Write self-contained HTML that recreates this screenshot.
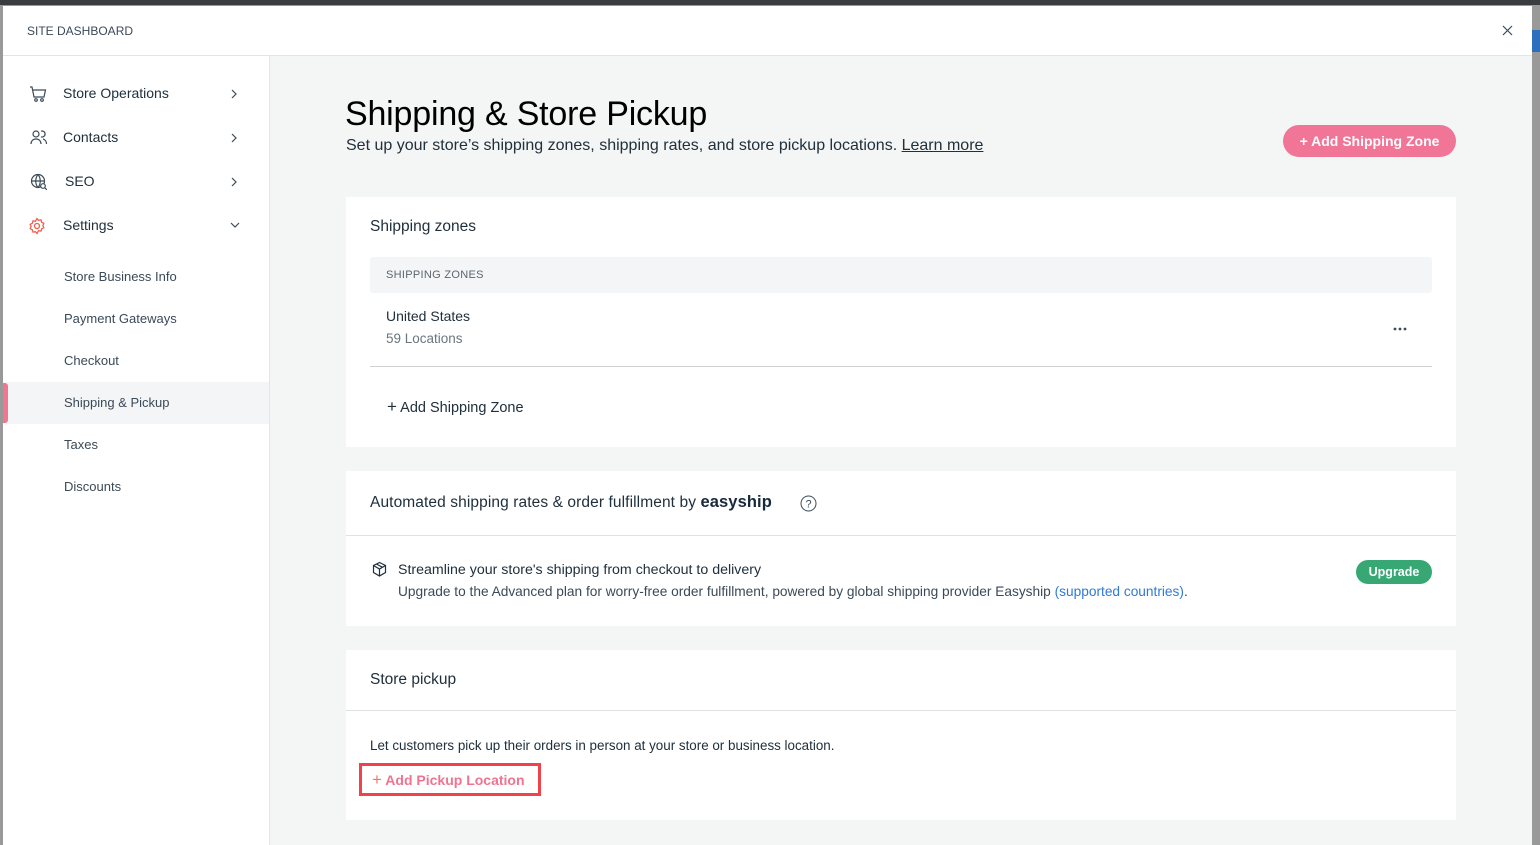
<!DOCTYPE html>
<html><head><meta charset="utf-8"><style>
*{margin:0;padding:0;box-sizing:border-box}
body{width:1540px;height:845px;overflow:hidden;background:#999;font-family:"Liberation Sans",sans-serif;position:relative;color:#20303c}
.a{position:absolute;white-space:nowrap}
.topbar{left:0;top:0;width:1540px;height:5px;background:#3a3d40}
.modal{left:3px;top:6px;width:1529px;height:839px;background:#fff}
.hdr{left:3px;top:55px;width:1529px;height:1px;background:#e3e5e6}
.main{left:270px;top:56px;width:1262px;height:789px;background:#f4f5f5}
.sideb{left:269px;top:56px;width:1px;height:789px;background:#e3e5e6}
.nav{font-size:14px;color:#20303c}
.sub{font-size:13px;color:#3b4a57}
.card{background:#fff;left:346px;width:1110px}
.line{background:#dfe1e2;height:1px}
</style></head><body>
<div class="a topbar"></div>
<div class="a modal"></div>
<div class="a" style="left:1532px;top:30px;width:8px;height:22px;background:#2c6fbf"></div>
<div class="a hdr"></div>
<div class="a" style="left:27px;top:24px;font-size:12px;color:#3b4a57">SITE DASHBOARD</div>
<svg class="a" style="left:1502px;top:25px" width="11" height="11" viewBox="0 0 11 11"><path d="M1 1L10 10M10 1L1 10" stroke="#3b4a57" stroke-width="1.2"/></svg>
<div class="a main"></div>
<div class="a sideb"></div>

<svg class="a" style="left:29px;top:85px" width="18" height="18" viewBox="0 0 18 18" fill="none" stroke="#3b4a57" stroke-width="1.2"><path d="M1 2h2l2 10h10l1.5-7H4"/><circle cx="7" cy="15" r="1.3"/><circle cx="13" cy="15" r="1.3"/></svg>
<div class="a nav" style="left:63px;top:85px">Store Operations</div>
<svg class="a" style="left:30px;top:129px" width="18" height="16" viewBox="0 0 18 16" fill="none" stroke="#3b4a57" stroke-width="1.2"><circle cx="6" cy="5" r="3"/><path d="M1 15c0-3 2-5 5-5s5 2 5 5"/><path d="M11 2.2a3 3 0 110 5.6M13 10c2 .5 3.5 2.5 3.5 5"/></svg>
<div class="a nav" style="left:63px;top:129px">Contacts</div>
<svg class="a" style="left:30px;top:173px" width="18" height="18" viewBox="0 0 18 18" fill="none" stroke="#3b4a57" stroke-width="1.2"><circle cx="8" cy="8" r="6.5"/><path d="M1.5 8h13M8 1.5c-3 3.5-3 9.5 0 13M8 1.5c3 3.5 3 9.5 0 13"/><circle cx="13" cy="13" r="2.3" fill="#fff"/><path d="M14.8 14.8l2 2"/></svg>
<div class="a nav" style="left:65px;top:173px">SEO</div>
<svg class="a" style="left:28px;top:217px" width="18" height="18" viewBox="0 0 18 18" fill="none" stroke="#f0604f" stroke-width="1.3"><path d="M9 1.5l1.6 1.8 2.4-.4.6 2.3 2.2 1.1-.9 2.2.9 2.2-2.2 1.1-.6 2.3-2.4-.4L9 16.5l-1.6-1.8-2.4.4-.6-2.3-2.2-1.1.9-2.2-.9-2.2 2.2-1.1.6-2.3 2.4.4z"/><circle cx="9" cy="9" r="2.5"/></svg>
<div class="a nav" style="left:63px;top:217px">Settings</div>
<svg class="a" style="left:231px;top:89px" width="6" height="10"><path d="M1 1l4 4-4 4" fill="none" stroke="#3b4a57" stroke-width="1.2"/></svg>
<svg class="a" style="left:231px;top:133px" width="6" height="10"><path d="M1 1l4 4-4 4" fill="none" stroke="#3b4a57" stroke-width="1.2"/></svg>
<svg class="a" style="left:231px;top:177px" width="6" height="10"><path d="M1 1l4 4-4 4" fill="none" stroke="#3b4a57" stroke-width="1.2"/></svg>
<svg class="a" style="left:230px;top:222px" width="10" height="6"><path d="M1 1l4 4 4-4" fill="none" stroke="#3b4a57" stroke-width="1.2"/></svg>
<div class="a sub" style="left:64px;top:269px">Store Business Info</div>
<div class="a sub" style="left:64px;top:311px">Payment Gateways</div>
<div class="a sub" style="left:64px;top:353px">Checkout</div>
<div class="a" style="left:3px;top:382px;width:266px;height:42px;background:#f4f5f7"></div>
<div class="a" style="left:3px;top:383px;width:5px;height:40px;background:#f0778f;border-radius:0 3px 3px 0"></div>
<div class="a sub" style="left:64px;top:395px">Shipping &amp; Pickup</div>
<div class="a sub" style="left:64px;top:437px">Taxes</div>
<div class="a sub" style="left:64px;top:479px">Discounts</div>

<div class="a" style="left:345px;top:95px;font-size:34px;color:#000;letter-spacing:-0.2px">Shipping &amp; Store Pickup</div>
<div class="a" style="left:346px;top:137px;font-size:16px;color:#20303c">Set up your store’s shipping zones, shipping rates, and store pickup locations. <span style="text-decoration:underline">Learn more</span></div>
<div class="a" style="left:1283px;top:125px;width:173px;height:32px;border-radius:16px;background:#f07596;color:#fff;font-size:14px;font-weight:bold;line-height:32px;text-align:center">+ Add Shipping Zone</div>

<div class="a card" style="top:197px;height:250px"></div>
<div class="a" style="left:370px;top:218px;font-size:15.5px;color:#20303c">Shipping zones</div>
<div class="a" style="left:370px;top:257px;width:1062px;height:36px;background:#f4f5f7;border-radius:3px"></div>
<div class="a" style="left:386px;top:269px;font-size:11px;color:#5a6670;letter-spacing:0.3px">SHIPPING ZONES</div>
<div class="a" style="left:386px;top:308px;font-size:14px;color:#20303c">United States</div>
<div class="a" style="left:386px;top:331px;font-size:13.5px;color:#6a7680">59 Locations</div>
<svg class="a" style="left:1393px;top:327px" width="14" height="4"><circle cx="2" cy="2" r="1.4" fill="#3b4a57"/><circle cx="7" cy="2" r="1.4" fill="#3b4a57"/><circle cx="12" cy="2" r="1.4" fill="#3b4a57"/></svg>
<div class="a line" style="left:370px;top:366px;width:1062px;background:#cfd2d4"></div>
<div class="a" style="left:387px;top:397px;font-size:14.5px;color:#20303c"><span style="font-size:17px">+</span> Add Shipping Zone</div>

<div class="a card" style="top:471px;height:155px"></div>
<div class="a" style="left:370px;top:493px;font-size:15.5px;color:#20303c;letter-spacing:0.1px">Automated shipping rates &amp; order fulfillment by <b style="color:#172a3a;font-size:16.5px">easyship</b></div>
<svg class="a" style="left:800px;top:495px" width="17" height="17" viewBox="0 0 17 17"><circle cx="8.5" cy="8.5" r="7.5" fill="none" stroke="#3b4a57" stroke-width="1"/><text x="8.5" y="12.5" text-anchor="middle" font-size="11" fill="#3b4a57" font-family="Liberation Sans">?</text></svg>
<div class="a line" style="left:346px;top:535px;width:1110px"></div>
<svg class="a" style="left:371px;top:561px" width="17" height="17" viewBox="0 0 17 17" fill="none" stroke="#20303c" stroke-width="1.2"><path d="M8.5 1.5l6 3v7l-6 3.5-6-3.5v-7z"/><path d="M2.5 4.5l6 3.5 6-3.5M8.5 8v7M5.5 3l6 3.3"/></svg>
<div class="a" style="left:398px;top:562px;font-size:14.2px;color:#20303c">Streamline your store's shipping from checkout to delivery</div>
<div class="a" style="left:398px;top:584px;font-size:13.7px;color:#3b4a57">Upgrade to the Advanced plan for worry-free order fulfillment, powered by global shipping provider Easyship <span style="color:#2f7ad6">(supported countries)</span>.</div>
<div class="a" style="left:1356px;top:560px;width:76px;height:24px;border-radius:12px;background:#37a874;color:#fff;font-size:12.5px;font-weight:bold;line-height:24px;text-align:center">Upgrade</div>

<div class="a card" style="top:650px;height:170px"></div>
<div class="a" style="left:370px;top:671px;font-size:15.5px;color:#20303c">Store pickup</div>
<div class="a line" style="left:346px;top:710px;width:1110px"></div>
<div class="a" style="left:370px;top:738px;font-size:13.4px;color:#20303c">Let customers pick up their orders in person at your store or business location.</div>
<div class="a" style="left:359px;top:763px;width:182px;height:33px;border:3px solid #f0424a"></div>
<div class="a" style="left:372px;top:770px;font-size:14px;color:#f07390;font-weight:bold"><span style="color:#f07a6a;font-size:17px;font-weight:normal">+</span> Add Pickup Location</div>
</body></html>
